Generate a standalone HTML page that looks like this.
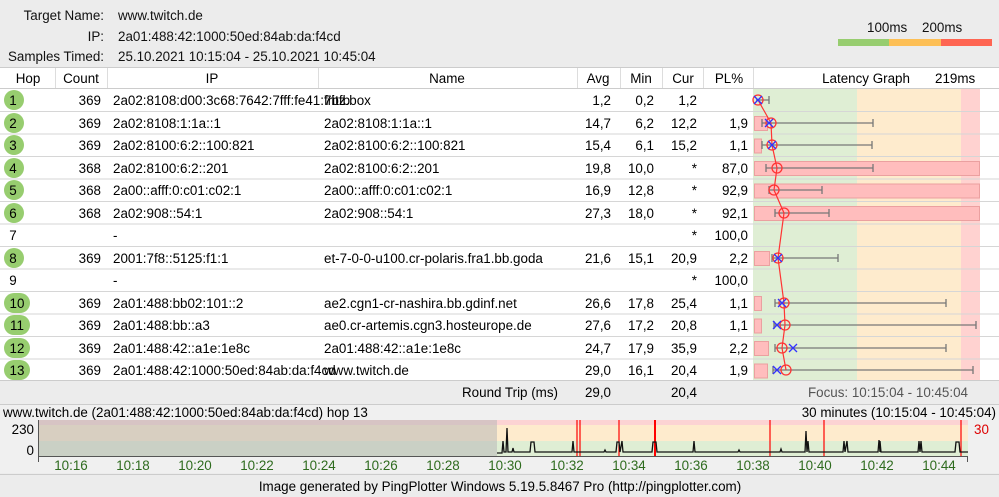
<!DOCTYPE html>
<html><head><meta charset="utf-8"><style>
*{margin:0;padding:0;box-sizing:border-box}
body{width:999px;height:497px;background:#ececec;font-family:"Liberation Sans","DejaVu Sans",sans-serif;font-size:13.4px;color:#111;position:relative;overflow:hidden}
.a{position:absolute;white-space:nowrap}
.r{text-align:right}
</style></head><body>
<div class="a r" style="left:0;width:104px;top:8px">Target Name:</div>
<div class="a" style="left:118px;top:8px">www.twitch.de</div>
<div class="a r" style="left:0;width:104px;top:29px">IP:</div>
<div class="a" style="left:118px;top:29px">2a01:488:42:1000:50ed:84ab:da:f4cd</div>
<div class="a r" style="left:0;width:104px;top:49px">Samples Timed:</div>
<div class="a" style="left:118px;top:49px">25.10.2021 10:15:04 - 25.10.2021 10:45:04</div>
<div class="a" style="left:867px;top:20px">100ms</div>
<div class="a" style="left:922px;top:20px">200ms</div>
<div class="a" style="left:838px;top:39px;width:51px;height:7px;background:#97cd6f"></div>
<div class="a" style="left:889px;top:39px;width:52px;height:7px;background:#fdbf55"></div>
<div class="a" style="left:941px;top:39px;width:51px;height:7px;background:#fe6552"></div>

<svg class="a" style="left:0;top:0" width="999" height="497" xmlns="http://www.w3.org/2000/svg" font-family="Liberation Sans, DejaVu Sans, sans-serif" font-size="13.4">
<rect x="0" y="67" width="999" height="313" fill="#fff"/>
<line x1="0" y1="67.5" x2="999" y2="67.5" stroke="#ccc"/>
<line x1="0" y1="88.5" x2="999" y2="88.5" stroke="#ccc"/>
<g stroke="#ddd">
<line x1="55.5" y1="68" x2="55.5" y2="88"/><line x1="107.5" y1="68" x2="107.5" y2="88"/><line x1="318.5" y1="68" x2="318.5" y2="88"/><line x1="577.5" y1="68" x2="577.5" y2="88"/><line x1="620.5" y1="68" x2="620.5" y2="88"/><line x1="662.5" y1="68" x2="662.5" y2="88"/><line x1="703.5" y1="68" x2="703.5" y2="88"/><line x1="753.5" y1="68" x2="753.5" y2="88"/>
</g>
<g text-anchor="middle"><text x="28" y="83">Hop</text><text x="81" y="83">Count</text><text x="212" y="83">IP</text><text x="447" y="83">Name</text><text x="598" y="83">Avg</text><text x="641" y="83">Min</text><text x="683" y="83">Cur</text><text x="729" y="83">PL%</text><text x="866" y="83">Latency Graph</text></g>
<text x="935" y="83">219ms</text>
<rect x="753" y="89" width="104" height="291" fill="#dfeed4"/>
<rect x="857" y="89" width="104" height="291" fill="#feebcd"/>
<rect x="961" y="89" width="19" height="291" fill="#ffd2d0"/>
<g stroke="#d6d6d6">
<line x1="0" y1="111.5" x2="999" y2="111.5"/><line x1="0" y1="134" x2="999" y2="134"/><line x1="0" y1="156.5" x2="999" y2="156.5"/><line x1="0" y1="179" x2="999" y2="179"/><line x1="0" y1="201.5" x2="999" y2="201.5"/><line x1="0" y1="224" x2="999" y2="224"/><line x1="0" y1="246.5" x2="999" y2="246.5"/><line x1="0" y1="269" x2="999" y2="269"/><line x1="0" y1="291.5" x2="999" y2="291.5"/><line x1="0" y1="314" x2="999" y2="314"/><line x1="0" y1="336.5" x2="999" y2="336.5"/><line x1="0" y1="359" x2="999" y2="359"/>
</g>
<g fill="#ffbdbd" stroke="#eba0a0">
<rect x="754.5" y="116.5" width="13" height="14"/>
<rect x="754.5" y="139" width="7" height="14"/>
<rect x="754.5" y="161.5" width="225" height="14"/>
<rect x="754.5" y="184" width="225" height="14"/>
<rect x="754.5" y="206.5" width="225" height="14"/>
<rect x="754.5" y="251.5" width="15" height="14"/>
<rect x="754.5" y="296.5" width="7" height="14"/>
<rect x="754.5" y="319" width="7" height="14"/>
<rect x="754.5" y="341.5" width="14" height="14"/>
<rect x="754.5" y="364" width="13" height="14"/>
</g>
<g stroke="#777" stroke-width="1.3" fill="none">
<path d="M756 100H769M769 96v8"/>
<path d="M762 123H873M762 119v8M873 119v8"/>
<path d="M762 145H872M762 141v8M872 141v8"/>
<path d="M766 168H873M766 164v8M873 164v8"/>
<path d="M769 190H822M769 186v8M822 186v8"/>
<path d="M775 213H829M775 209v8M829 209v8"/>
<path d="M772 258H838M772 254v8M838 254v8"/>
<path d="M775 303H946M775 299v8M946 299v8"/>
<path d="M774 325H976M774 321v8M976 321v8"/>
<path d="M775 348H946M775 344v8M946 344v8"/>
<path d="M773 370H973M773 366v8M973 366v8"/>
</g>
<polyline fill="none" stroke="#f33" stroke-width="1.2" points="758,100 771,123 772,145 777,168 774,190 784,213 778,258 784,303 785,325 782,348 786,370"/>
<g fill="none" stroke="#f33" stroke-width="1.3">
<circle cx="758" cy="100" r="5"/><circle cx="771" cy="123" r="5"/><circle cx="772" cy="145" r="5"/><circle cx="777" cy="168" r="5"/><circle cx="774" cy="190" r="5"/><circle cx="784" cy="213" r="5"/><circle cx="778" cy="258" r="5"/><circle cx="784" cy="303" r="5"/><circle cx="785" cy="325" r="5"/><circle cx="782" cy="348" r="5"/><circle cx="786" cy="370" r="5"/>
</g>
<g stroke="#33f" stroke-width="1.3">
<path d="M754 96l8 8M762 96l-8 8"/>
<path d="M765 119l8 8M773 119l-8 8"/>
<path d="M768 141l8 8M776 141l-8 8"/>
<path d="M774 254l8 8M782 254l-8 8"/>
<path d="M778 299l8 8M786 299l-8 8"/>
<path d="M773 321l8 8M781 321l-8 8"/>
<path d="M789 344l8 8M797 344l-8 8"/>
<path d="M773 366l8 8M781 366l-8 8"/>
</g>
<g fill="#97cd6f"><circle cx="14" cy="100" r="10"/><circle cx="14" cy="123" r="10"/><circle cx="14" cy="145" r="10"/><circle cx="14" cy="168" r="10"/><circle cx="14" cy="190" r="10"/><circle cx="14" cy="213" r="10"/><circle cx="14" cy="258" r="10"/><rect x="4" y="293" width="26" height="20" rx="10"/><rect x="4" y="315" width="26" height="20" rx="10"/><rect x="4" y="338" width="26" height="20" rx="10"/><rect x="4" y="360" width="26" height="20" rx="10"/></g>
<g text-anchor="middle"><text x="13" y="105">1</text><text x="13" y="128">2</text><text x="13" y="150">3</text><text x="13" y="173">4</text><text x="13" y="195">5</text><text x="13" y="218">6</text><text x="13" y="240">7</text><text x="13" y="263">8</text><text x="13" y="285">9</text><text x="17" y="308">10</text><text x="17" y="330">11</text><text x="17" y="353">12</text><text x="17" y="375">13</text></g>
<g text-anchor="end"><text x="101" y="105">369</text><text x="101" y="128">369</text><text x="101" y="150">369</text><text x="101" y="173">368</text><text x="101" y="195">368</text><text x="101" y="218">368</text><text x="101" y="263">369</text><text x="101" y="308">369</text><text x="101" y="330">369</text><text x="101" y="353">369</text><text x="101" y="375">369</text></g>
<g><text x="113" y="105">2a02:8108:d00:3c68:7642:7fff:fe41:7bfb</text><text x="113" y="128">2a02:8108:1:1a::1</text><text x="113" y="150">2a02:8100:6:2::100:821</text><text x="113" y="173">2a02:8100:6:2::201</text><text x="113" y="195">2a00::afff:0:c01:c02:1</text><text x="113" y="218">2a02:908::54:1</text><text x="113" y="240">-</text><text x="113" y="263">2001:7f8::5125:f1:1</text><text x="113" y="285">-</text><text x="113" y="308">2a01:488:bb02:101::2</text><text x="113" y="330">2a01:488:bb::a3</text><text x="113" y="353">2a01:488:42::a1e:1e8c</text><text x="113" y="375">2a01:488:42:1000:50ed:84ab:da:f4cd</text></g>
<g><text x="324" y="105">fritz.box</text><text x="324" y="128">2a02:8108:1:1a::1</text><text x="324" y="150">2a02:8100:6:2::100:821</text><text x="324" y="173">2a02:8100:6:2::201</text><text x="324" y="195">2a00::afff:0:c01:c02:1</text><text x="324" y="218">2a02:908::54:1</text><text x="324" y="263">et-7-0-0-u100.cr-polaris.fra1.bb.goda</text><text x="324" y="308">ae2.cgn1-cr-nashira.bb.gdinf.net</text><text x="324" y="330">ae0.cr-artemis.cgn3.hosteurope.de</text><text x="324" y="353">2a01:488:42::a1e:1e8c</text><text x="324" y="375">www.twitch.de</text></g>
<g text-anchor="end">
<text x="611" y="105">1,2</text><text x="654" y="105">0,2</text><text x="697" y="105">1,2</text>
<text x="611" y="128">14,7</text><text x="654" y="128">6,2</text><text x="697" y="128">12,2</text><text x="748" y="128">1,9</text>
<text x="611" y="150">15,4</text><text x="654" y="150">6,1</text><text x="697" y="150">15,2</text><text x="748" y="150">1,1</text>
<text x="611" y="173">19,8</text><text x="654" y="173">10,0</text><text x="697" y="173">*</text><text x="748" y="173">87,0</text>
<text x="611" y="195">16,9</text><text x="654" y="195">12,8</text><text x="697" y="195">*</text><text x="748" y="195">92,9</text>
<text x="611" y="218">27,3</text><text x="654" y="218">18,0</text><text x="697" y="218">*</text><text x="748" y="218">92,1</text>
<text x="697" y="240">*</text><text x="748" y="240">100,0</text>
<text x="611" y="263">21,6</text><text x="654" y="263">15,1</text><text x="697" y="263">20,9</text><text x="748" y="263">2,2</text>
<text x="697" y="285">*</text><text x="748" y="285">100,0</text>
<text x="611" y="308">26,6</text><text x="654" y="308">17,8</text><text x="697" y="308">25,4</text><text x="748" y="308">1,1</text>
<text x="611" y="330">27,6</text><text x="654" y="330">17,2</text><text x="697" y="330">20,8</text><text x="748" y="330">1,1</text>
<text x="611" y="353">24,7</text><text x="654" y="353">17,9</text><text x="697" y="353">35,9</text><text x="748" y="353">2,2</text>
<text x="611" y="375">29,0</text><text x="654" y="375">16,1</text><text x="697" y="375">20,4</text><text x="748" y="375">1,9</text>
</g>
<line x1="0" y1="380.5" x2="999" y2="380.5" stroke="#ccc"/>
<text x="558" y="397" text-anchor="end">Round Trip (ms)</text>
<text x="611" y="397" text-anchor="end">29,0</text>
<text x="697" y="397" text-anchor="end">20,4</text>
<text x="968" y="397" text-anchor="end" fill="#555">Focus: 10:15:04 - 10:45:04</text>
<line x1="0" y1="404.5" x2="999" y2="404.5" stroke="#ccc"/>
<rect x="0" y="405" width="999" height="68" fill="#f0f0f0"/>
<text x="3" y="417">www.twitch.de (2a01:488:42:1000:50ed:84ab:da:f4cd) hop 13</text>
<text x="996" y="417" text-anchor="end">30 minutes (10:15:04 - 10:45:04)</text>
<text x="34" y="434" text-anchor="end">230</text>
<text x="34" y="455" text-anchor="end">0</text>
<text x="974" y="434" fill="#d00">30</text>
<rect x="39" y="420" width="929" height="5" fill="#fcd3d3"/>
<rect x="39" y="425" width="929" height="16" fill="#feebcd"/>
<rect x="39" y="441" width="929" height="15" fill="#dfeed4"/>
<rect x="39" y="420" width="458" height="36" fill="#b8b8b8" opacity="0.55"/>
<g stroke="#f00" stroke-width="1.2"><line x1="577" y1="420" x2="577" y2="456"/><line x1="580" y1="420" x2="580" y2="456"/><line x1="619" y1="420" x2="619" y2="456"/><line x1="655" y1="420" x2="655" y2="456" stroke-width="2"/><line x1="770" y1="420" x2="770" y2="456"/><line x1="824" y1="420" x2="824" y2="456"/><line x1="961" y1="420" x2="961" y2="456"/></g>
<polyline fill="none" stroke="#111" stroke-width="1.3" points="497,453 502,453 503,441 504,452 506,452 507,428 508,452 512,452 513,448 514,452 530,452 531,442 534,442 535,452 547,452 548,452 572,452 573,441 574,452 594,452 604,452 605,450 606,452 616,452 617,442 619,442 620,452 622,441 623,452 643,452 652,452 653,442 656,442 657,452 693,452 694,441 695,452 738,452 739,450 740,452 780,452 781,449 782,452 805,452 806,431 807,452 808,441 809,452 843,452 844,441 845,452 847,441 848,452 855,452 878,452 879,440 880,452 880,441 881,452 918,452 919,441 920,452 921,441 922,452 955,452 956,442 959,442 960,452 968,452"/>
<line x1="38" y1="456.5" x2="968" y2="456.5" stroke="#555"/>
<line x1="38.5" y1="420" x2="38.5" y2="462" stroke="#555"/>
<line x1="967.5" y1="456" x2="967.5" y2="462" stroke="#555"/>
<g fill="#2e6b1e" text-anchor="middle"><text x="71" y="470">10:16</text><text x="133" y="470">10:18</text><text x="195" y="470">10:20</text><text x="257" y="470">10:22</text><text x="319" y="470">10:24</text><text x="381" y="470">10:26</text><text x="443" y="470">10:28</text><text x="505" y="470">10:30</text><text x="567" y="470">10:32</text><text x="629" y="470">10:34</text><text x="691" y="470">10:36</text><text x="753" y="470">10:38</text><text x="815" y="470">10:40</text><text x="877" y="470">10:42</text><text x="939" y="470">10:44</text></g>
<line x1="0" y1="474.5" x2="999" y2="474.5" stroke="#ccc"/>
<text x="500" y="491" text-anchor="middle">Image generated by PingPlotter Windows 5.19.5.8467 Pro (http://pingplotter.com)</text>
</svg>
</body></html>
